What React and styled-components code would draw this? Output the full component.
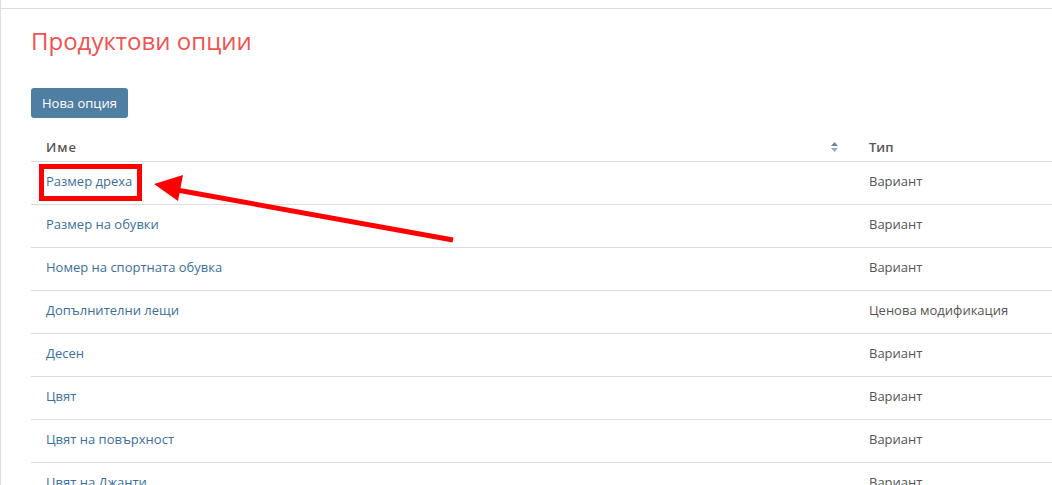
import React from "react";
import styled, { createGlobalStyle } from "styled-components";

const GlobalStyle = createGlobalStyle`
	html, body {
		margin: 0;
		padding: 0;
		background: #fff;
		overflow: hidden;
	}
	body {
		font-family: "Open Sans", "Liberation Sans", sans-serif;
		font-size: 13px;
		color: #555;
	}
`;

const Page = styled.div`
	position: relative;
	height: 485px;
	border-left: 1px solid #ddd;
	box-sizing: border-box;
`;

const TopBar = styled.div`
	height: 8px;
	border-bottom: 1px solid #ddd;
`;

const Content = styled.div`
	padding: 0 0 0 30px;
`;

const Title = styled.h1`
	margin: 0;
	padding-top: 15px;
	font-size: 24px;
	font-weight: 400;
	line-height: 33px;
	color: #f05250;
`;

const NewButton = styled.button`
	margin-top: 31px;
	height: 30px;
	padding: 0 11px;
	border: none;
	border-radius: 3px;
	background: #4f7ea3;
	color: #fff;
	font-family: inherit;
	font-size: 13px;
	cursor: pointer;
`;

const Table = styled.table`
	margin-top: 12px;
	width: 100%;
	border-collapse: collapse;
`;

const Th = styled.th`
	position: relative;
	text-align: left;
	padding: 8px 15px 5px;
	line-height: 18px;
	font-size: 13px;
	font-weight: 600;
	letter-spacing: ${(p) => (p.spaced ? "1px" : "0")};
	color: #555;
	border-bottom: 1px solid #ddd;
	width: ${(p) => p.w || "auto"};
`;

const SortIcon = styled.svg`
	position: absolute;
	right: 16px;
	top: 12px;
`;

const Td = styled.td`
	padding: 10px 15px 14px;
	line-height: 18px;
	border-bottom: 1px solid #ddd;
	color: #555;
	white-space: nowrap;
`;

const NameLink = styled.a`
	color: #3b6f9b;
	text-decoration: none;
`;

const Annotation = styled.svg`
	position: absolute;
	left: 0;
	top: 0;
	pointer-events: none;
`;

const options = [
	{ name: "Размер дреха", type: "Вариант" },
	{ name: "Размер на обувки", type: "Вариант" },
	{ name: "Номер на спортната обувка", type: "Вариант" },
	{ name: "Допълнителни лещи", type: "Ценова модификация" },
	{ name: "Десен", type: "Вариант" },
	{ name: "Цвят", type: "Вариант" },
	{ name: "Цвят на повърхност", type: "Вариант" },
	{ name: "Цвят на Джанти", type: "Вариант" },
];

export default function App() {
	return (
		<>
			<GlobalStyle />
			<Page>
				<TopBar />
				<Content>
					<Title>Продуктови опции</Title>
					<NewButton>Нова опция</NewButton>
					<Table>
						<thead>
							<tr>
								<Th w="793px" spaced>
									Име
									<SortIcon width="7" height="10" viewBox="0 0 7 10">
										<path d="M3.5 0 L7 4 H0 Z" fill="#6f849c" />
										<path d="M0 6 H7 L3.5 10 Z" fill="#9aa9ba" />
									</SortIcon>
								</Th>
								<Th>Тип</Th>
							</tr>
						</thead>
						<tbody>
							{options.map((o) => (
								<tr key={o.name}>
									<Td>
										<NameLink href="#">{o.name}</NameLink>
									</Td>
									<Td>{o.type}</Td>
								</tr>
							))}
						</tbody>
					</Table>
				</Content>
				<Annotation width="1052" height="485">
					<rect x="40.5" y="166.5" width="98" height="32" fill="none" stroke="#f00" strokeWidth="5" />
					<line x1="176" y1="190" x2="452" y2="240" stroke="#f00" strokeWidth="5" />
					<path d="M153 184 L182 175 L177 201 Z" fill="#f00" />
				</Annotation>
			</Page>
		</>
	);
}
